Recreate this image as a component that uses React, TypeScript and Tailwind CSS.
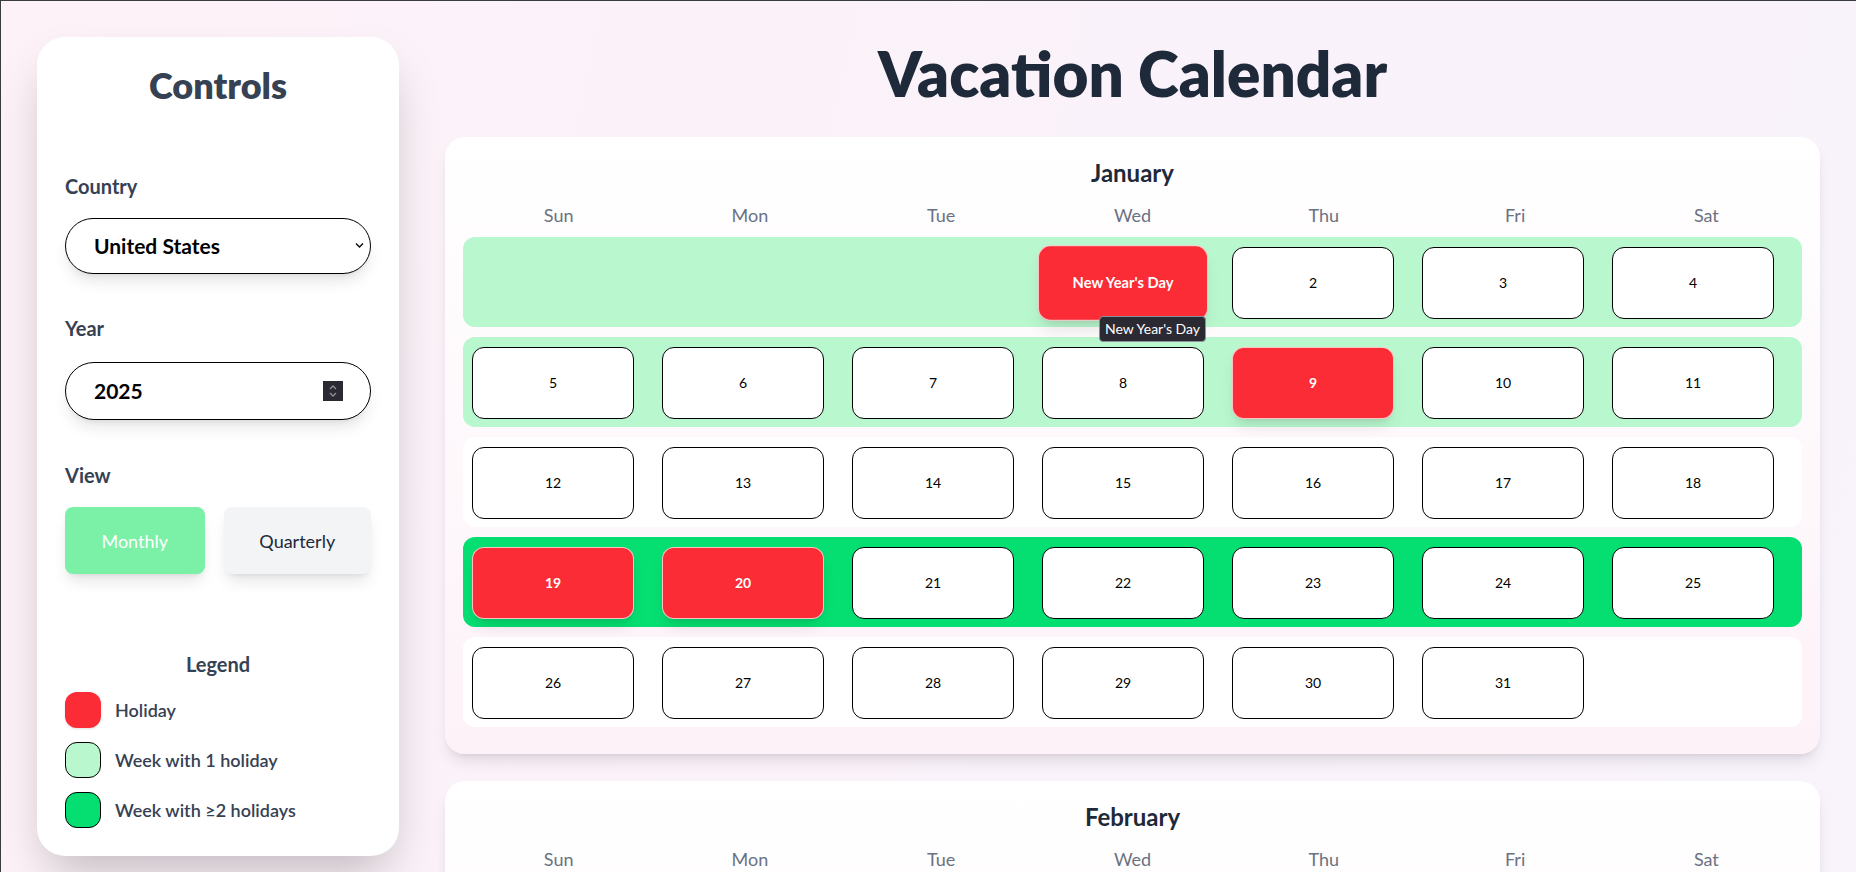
import { useMemo } from "react";

const HOLIDAYS: Record<string, string> = {
  "0-1": "New Year's Day",
  "0-9": "National Day of Mourning",
  "0-19": "Inauguration Day",
  "0-20": "Martin Luther King Jr. Day",
  "1-17": "Presidents' Day",
  "4-26": "Memorial Day",
  "5-19": "Juneteenth",
  "6-4": "Independence Day",
  "8-1": "Labor Day",
  "9-13": "Columbus Day",
  "10-11": "Veterans Day",
  "10-27": "Thanksgiving Day",
  "11-25": "Christmas Day",
};

const MONTHS = [
  "January", "February", "March", "April", "May", "June",
  "July", "August", "September", "October", "November", "December",
];
const WEEKDAYS = ["Sun", "Mon", "Tue", "Wed", "Thu", "Fri", "Sat"];

const YEAR = 2025;
const HOVERED = "0-1";

function buildWeeks(month: number) {
  const first = new Date(YEAR, month, 1).getDay();
  const days = new Date(YEAR, month + 1, 0).getDate();
  const cells: (number | null)[] = Array(first).fill(null);
  for (let d = 1; d <= days; d++) cells.push(d);
  while (cells.length % 7) cells.push(null);
  const weeks: (number | null)[][] = [];
  for (let i = 0; i < cells.length; i += 7) weeks.push(cells.slice(i, i + 7));
  return weeks;
}

function Spinner() {
  return (
    <div className="flex h-5 w-5 flex-col items-center justify-center bg-[#2b2a33]">
      <svg width="10" height="14" viewBox="0 0 10 14" fill="none" stroke="#8f8f9d" strokeWidth="1.3">
        <path d="M2 5 L5 2 L8 5" />
        <path d="M2 9 L5 12 L8 9" />
      </svg>
    </div>
  );
}

function Sidebar() {
  return (
    <aside className="w-[362px] shrink-0 rounded-[28px] bg-white p-7 shadow-2xl">
      <h2 className="text-center text-4xl leading-10 font-extrabold text-gray-700">Controls</h2>

      <div className="mt-[67px] text-xl leading-7 font-bold text-gray-700">Country</div>
      <div className="relative mt-[18px] h-[56px]">
        <select
          defaultValue="us"
          className="h-full w-full appearance-none rounded-full border border-black bg-white pl-7 text-[21px] font-bold text-black shadow-lg outline-none"
        >
          <option value="us">United States</option>
          <option value="ca">Canada</option>
          <option value="gb">United Kingdom</option>
        </select>
        <svg
          className="pointer-events-none absolute top-[24px] right-[7px]"
          width="9"
          height="7"
          viewBox="0 0 9 7"
          fill="none"
          stroke="#111"
          strokeWidth="1.5"
        >
          <path d="M1 1.5 L4.5 5 L8 1.5" />
        </svg>
      </div>

      <div className="mt-10 text-xl leading-7 font-bold text-gray-700">Year</div>
      <div className="mt-5 flex h-[58px] items-center justify-between rounded-full border border-black bg-white pr-[27px] pl-7 shadow-lg">
        <span className="text-[21px] font-bold text-black">2025</span>
        <Spinner />
      </div>

      <div className="mt-[41px] text-xl leading-7 font-bold text-gray-700">View</div>
      <div className="mt-[18px] flex gap-[19px]">
        <button className="h-[67px] w-[141px] rounded-lg bg-green-300 text-lg text-white shadow-lg">Monthly</button>
        <button className="h-[67px] w-[149px] rounded-lg bg-gray-100 text-lg text-gray-800 shadow-lg">Quarterly</button>
      </div>

      <div className="mt-[76px] text-center text-xl leading-7 font-bold text-gray-700">Legend</div>
      <div className="mt-[14px] flex flex-col gap-[14px]">
        <div className="flex items-center gap-[14px]">
          <span className="h-9 w-9 rounded-xl bg-red-500 shadow-sm" />
          <span className="text-lg font-semibold text-gray-700">Holiday</span>
        </div>
        <div className="flex items-center gap-[14px]">
          <span className="h-9 w-9 rounded-xl border border-black bg-green-200" />
          <span className="text-lg font-semibold text-gray-700">Week with 1 holiday</span>
        </div>
        <div className="flex items-center gap-[14px]">
          <span className="h-9 w-9 rounded-xl border border-black bg-green-400" />
          <span className="text-lg font-semibold text-gray-700">Week with ≥2 holidays</span>
        </div>
      </div>
    </aside>
  );
}

function MonthCard({ month }: { month: number }) {
  const weeks = useMemo(() => buildWeeks(month), [month]);
  return (
    <section className="rounded-[20px] bg-linear-to-b from-white to-pink-50 px-[18px] pt-5 pb-[27px] shadow-lg">
      <h2 className="text-center text-2xl leading-8 font-bold text-gray-800">{MONTHS[month]}</h2>
      <div className="mt-3 grid grid-cols-7 text-center text-lg leading-7 text-gray-500">
        {WEEKDAYS.map((d) => (
          <div key={d}>{d}</div>
        ))}
      </div>
      <div className="mt-2 flex flex-col gap-[10px]">
        {weeks.map((week, wi) => {
          const count = week.filter((d) => d && HOLIDAYS[`${month}-${d}`]).length;
          const bg = count >= 2 ? "bg-green-400" : count === 1 ? "bg-green-200" : "bg-white";
          return (
            <div key={wi} className={`grid grid-cols-7 rounded-xl pt-[10px] pb-[8px] pl-[9px] ${bg}`}>
              {week.map((d, di) => {
                if (!d) return <div key={di} className="h-[72px]" />;
                const key = `${month}-${d}`;
                const holiday = HOLIDAYS[key];
                const hovered = key === HOVERED;
                return (
                  <div key={di} className="relative">
                    {holiday ? (
                      <div
                        className={`flex h-[72px] w-[162px] items-center justify-center rounded-xl border border-white/70 bg-red-500 text-sm font-bold text-white shadow-lg ${
                          hovered ? "relative z-10 scale-105" : ""
                        }`}
                      >
                        {hovered ? holiday : d}
                      </div>
                    ) : (
                      <div className="flex h-[72px] w-[162px] items-center justify-center rounded-xl border border-black bg-white text-sm text-black">
                        {d}
                      </div>
                    )}
                    {hovered && (
                      <div className="absolute top-[69px] left-[57px] z-20 rounded-[4px] border border-[#8f8f9d] bg-[#2b2a33] px-[5px] py-[2px] text-sm whitespace-nowrap text-white">
                        {holiday}
                      </div>
                    )}
                  </div>
                );
              })}
            </div>
          );
        })}
      </div>
    </section>
  );
}

export default function App() {
  return (
    <div className="min-h-screen border-t border-l border-[#3b3b42] bg-linear-to-br from-pink-50 to-violet-50 font-['Lato',sans-serif]">
      <div className="flex items-start gap-[46px] p-9">
        <Sidebar />
        <main className="min-w-0 flex-1">
          <h1 className="mb-[28px] text-center text-[62px] leading-[72px] font-extrabold text-gray-800">Vacation Calendar</h1>
          <div className="flex flex-col gap-[27px]">
            {MONTHS.map((_, m) => (
              <MonthCard key={m} month={m} />
            ))}
          </div>
        </main>
      </div>
    </div>
  );
}
